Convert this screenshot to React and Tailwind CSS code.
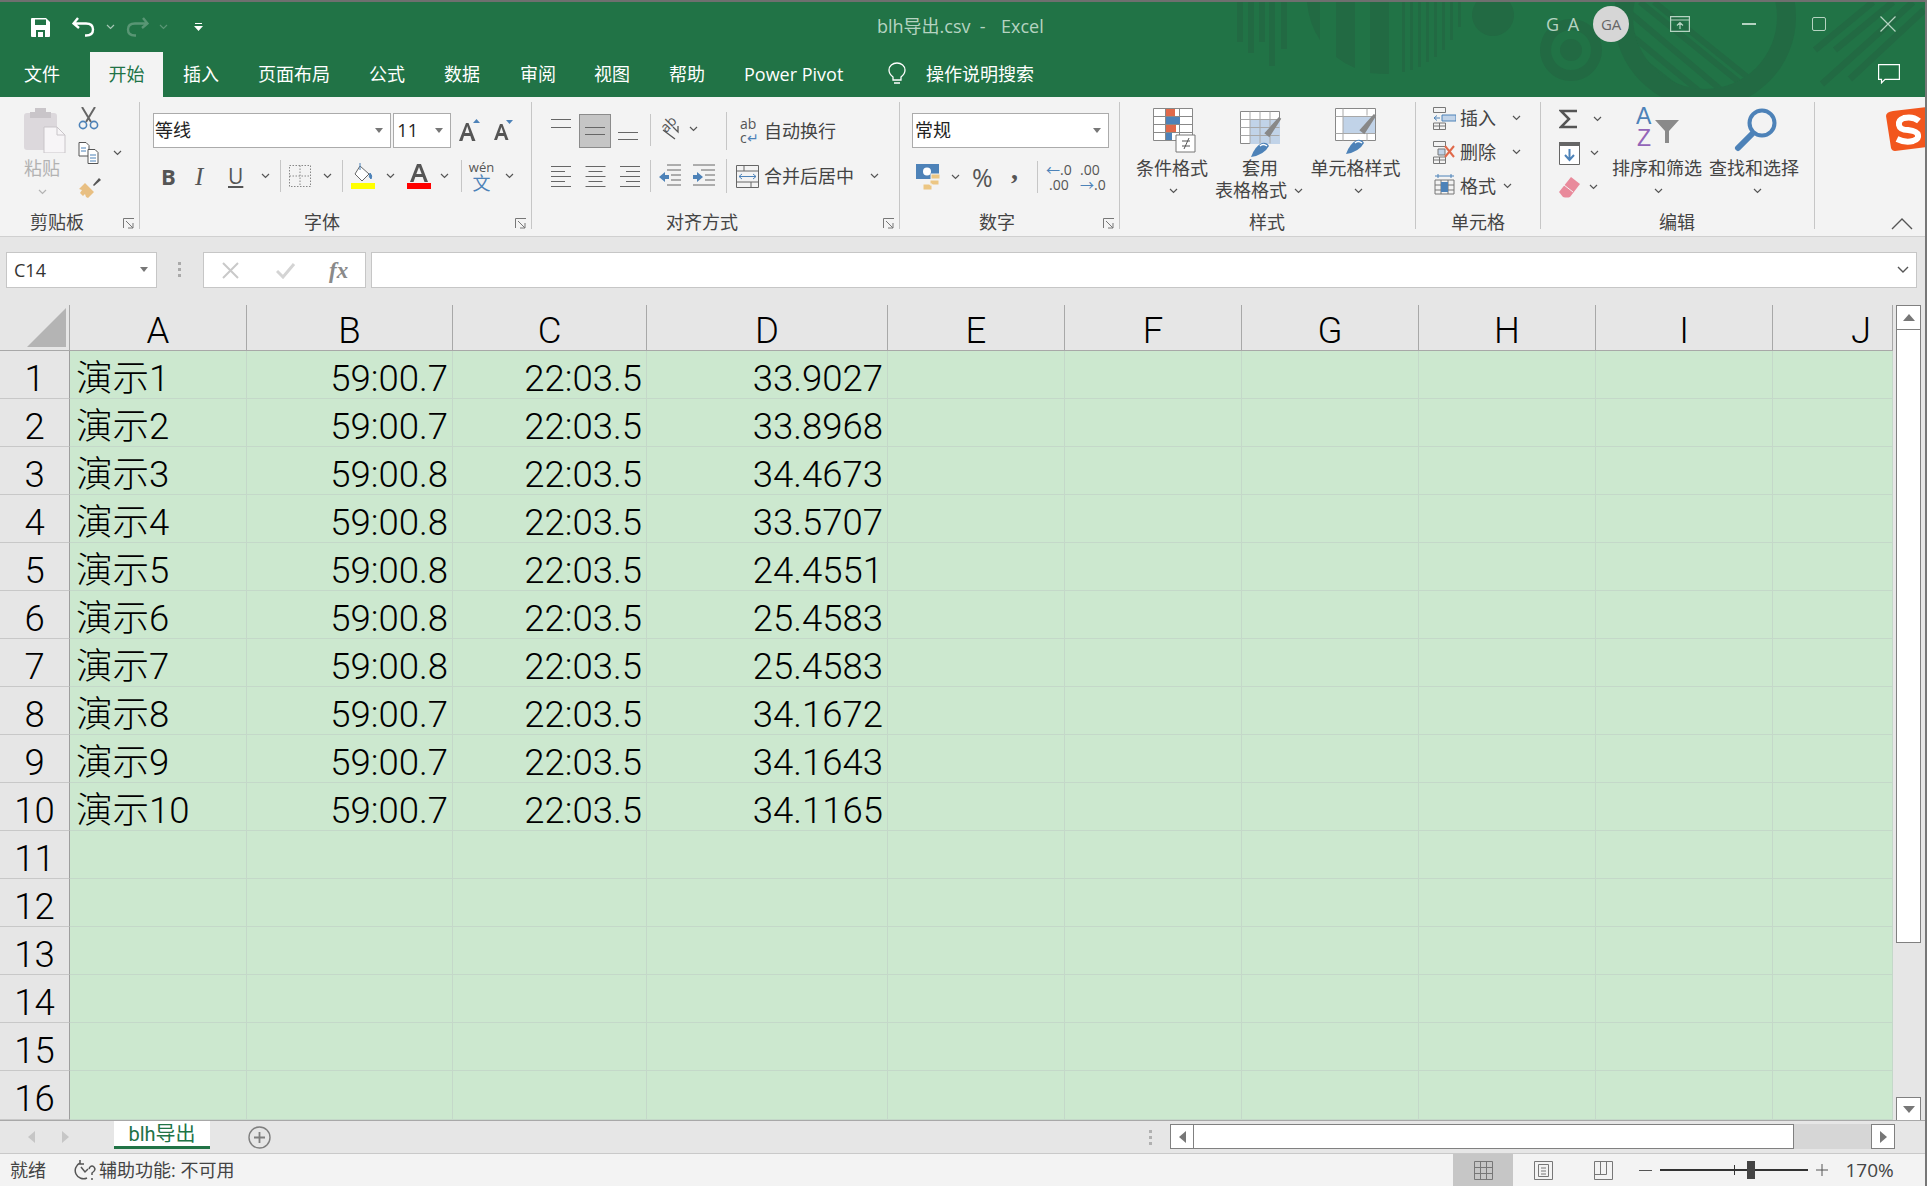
import React from "react";

const rows = [
  ["演示1", "59:00.7", "22:03.5", "33.9027"],
  ["演示2", "59:00.7", "22:03.5", "33.8968"],
  ["演示3", "59:00.8", "22:03.5", "34.4673"],
  ["演示4", "59:00.8", "22:03.5", "33.5707"],
  ["演示5", "59:00.8", "22:03.5", "24.4551"],
  ["演示6", "59:00.8", "22:03.5", "25.4583"],
  ["演示7", "59:00.8", "22:03.5", "25.4583"],
  ["演示8", "59:00.7", "22:03.5", "34.1672"],
  ["演示9", "59:00.7", "22:03.5", "34.1643"],
  ["演示10", "59:00.7", "22:03.5", "34.1165"],
];
const columns = ["A", "B", "C", "D", "E", "F", "G", "H", "I", "J"];
const tabs = [
  ["文件", "w-[90px] pl-[24px]"],
  ["开始", "w-[73px] justify-center bg-[#f3f3f3] text-[#217346]"],
  ["插入", "w-[95px] pl-[20px]"],
  ["页面布局", "w-[111px]"],
  ["公式", "w-[75px]"],
  ["数据", "w-[76px]"],
  ["审阅", "w-[74px]"],
  ["视图", "w-[75px]"],
  ["帮助", "w-[75px]"],
  ["Power Pivot", "w-[143px]"],
];

const Chev = ({ className = "", color = "#555" }) => (
  <svg width="9" height="6" viewBox="0 0 9 6" className={"shrink-0 " + className}>
    <path d="M1 1l3.5 3.5L8 1" fill="none" stroke={color} strokeWidth="1.2" />
  </svg>
);
const Caret = ({ className = "" }) => (
  <svg width="10" height="6" viewBox="0 0 10 6" className={"shrink-0 " + className}>
    <path d="M1 0h8L5 5z" fill="#777" />
  </svg>
);
const Sep = ({ className = "h-[32px]" }) => <div className={"w-px shrink-0 bg-[#c6c6c6] " + className} />;

// horizontal text alignment lines
const Lines = ({ ys, widths, align = "left", w = 21, h = 22 }) => (
  <svg width={w} height={h} viewBox={`0 0 ${w} ${h}`} className="shrink-0">
    {ys.map((y, i) => {
      const lw = widths[i % widths.length];
      const x = align === "left" ? 0 : align === "right" ? w - lw : (w - lw) / 2;
      return <rect key={y} x={x} y={y} width={lw} height="1" fill="#666" />;
    })}
  </svg>
);

const Launcher = () => (
  <svg width="12" height="11" viewBox="0 0 12 11" className="absolute right-[4px] bottom-[0px]">
    <path d="M.5 10V.5H11M3 3l7 7M10 5v5H5" fill="none" stroke="#777" />
  </svg>
);

function Group({ label, launcher, className, labelClass = "justify-center", children }) {
  return (
    <div className={"relative flex h-[127px] shrink-0 flex-col border-r border-[#c6c6c6] " + className}>
      <div className="h-[108px] shrink-0">{children}</div>
      <div className={"flex h-[24px] shrink-0 items-center whitespace-nowrap text-[18px] leading-[24px] text-[#444] " + labelClass}>{label}</div>
      {launcher && <Launcher />}
    </div>
  );
}

const Decor = () => (
  <svg width="1927" height="95" viewBox="0 0 1927 95" className="absolute left-0 top-0" fill="#226a43">
    <defs>
      <clipPath id="innerRing">
        <circle cx="1705" cy="15" r="72" />
      </clipPath>
    </defs>
    {[[1237, 40], [1248, 51], [1259, 40], [1269, 64], [1281, 47], [1402, 70], [1410, 68], [1418, 65], [1426, 60], [1434, 55], [1442, 48], [1450, 38], [1458, 25]].map(([x, h]) => (
      <rect key={x} x={x} y="0" width={x > 1400 ? 3 : 6} height={h} />
    ))}
    <path d="M1307 0h13v38q-11-16-13-38zM1336 0h19v66q-10-4-19-11zM1370 0h19v72q-10 0-19-1z" />
    <circle cx="1493" cy="13" r="21" />
    <path fillRule="evenodd" d="M1540 48a31 31 0 1 0 62 0a31 31 0 1 0-62 0zM1551 48a20 20 0 1 1 40 0a20 20 0 1 1-40 0z" />
    <circle cx="1571" cy="48" r="11" />
    <path fillRule="evenodd" d="M1614 15a91 91 0 1 0 182 0a91 91 0 1 0-182 0zM1633 15a72 72 0 1 1 144 0a72 72 0 1 1-144 0z" />
    <g clipPath="url(#innerRing)" stroke="#226a43" strokeWidth="6">
      <path d="M1640 0l104 84M1654 0l97 78M1630 11l90 76M1625 28l80 66M1626 46l64 50" />
    </g>
    <g stroke="#226a43" strokeWidth="6.5">
      <path d="M1873 0l-58 48M1893 0l-58 48M1913 0l-91 82M1924 8l-74 69" />
    </g>
  </svg>
);

const Title = () => (
  <div className="relative h-[97px] shrink-0 border-t-2 border-[#6f6f6f] bg-[#217346]">
    <Decor />
    <div className="relative flex h-[50px] items-center">
      <svg width="19" height="19" viewBox="0 0 19 19" className="ml-[31px]">
        <path d="M0 1q0-1 1-1h14l4 4v14q0 1-1 1H1q-1 0-1-1z" fill="#fff" />
        <path d="M4 1.5h11v5.5H4zM5 12h9v7H5z" fill="#217346" />
        <path d="M7 14h5v5H7z" fill="#fff" />
      </svg>
      <svg width="24" height="20" viewBox="0 0 24 20" className="ml-[22px]">
        <path d="M6 1L1.5 6.5 7 11M2 6.5h12q7 0 7 6 0 6-7 6h-1" fill="none" stroke="#fff" strokeWidth="2.4" />
      </svg>
      <Chev className="ml-[10px] opacity-60" color="#fff" />
      <svg width="24" height="20" viewBox="0 0 24 20" className="ml-[10px] opacity-25">
        <path d="M18 1l4.5 5.5L17 11M22 6.5H10q-7 0-7 6 0 6 7 6h1" fill="none" stroke="#fff" strokeWidth="2.4" />
      </svg>
      <Chev className="ml-[10px] opacity-25" color="#fff" />
      <svg width="9" height="9" viewBox="0 0 9 9" className="ml-[26px]">
        <path d="M1 0h7v1H1zM0 3h9L4.500 8z" fill="#fff" />
      </svg>
      <div className="-mt-[2px] ml-[674px] w-[190px] whitespace-pre text-[18px] leading-[24px] text-[#b5d3c1]">blh导出.csv  -  <span className="ml-[6px]">Excel</span></div>
      <div className="-mt-[6px] ml-[479px] flex items-center">
        <div className="text-[18px] tracking-[2px] text-[#b5d3c1]">G A</div>
        <div className="ml-[12px] flex h-[36px] w-[36px] items-center justify-center rounded-full bg-[#d6d6d6] text-[15px] text-[#666]">GA</div>
        <svg width="20" height="16" viewBox="0 0 20 16" className="ml-[41px]" fill="none" stroke="#b5d3c1" strokeWidth="1.2">
          <path d="M.6.6h18.8v14.8H.6zM.6 4h18.8M10 13V7M7 9.500L10 6.500l3 3" />
        </svg>
        <div className="ml-[52px] h-[1.5px] w-[14px] bg-[#b5d3c1]" />
        <div className="ml-[56px] h-[14px] w-[14px] rounded-[2px] border border-[#b5d3c1]" />
        <svg width="16" height="16" viewBox="0 0 16 16" className="ml-[54px]">
          <path d="M.5.5l15 15M15.500.5l-15 15" stroke="#b5d3c1" strokeWidth="1.2" />
        </svg>
      </div>
    </div>
    <div className="relative flex h-[45px] items-stretch text-[18px] text-white">
      {tabs.map(([t, cls]) => (
        <div key={t} className={"flex items-center " + cls}>{t}</div>
      ))}
      <svg width="20" height="24" viewBox="0 0 20 24" className="mt-[10px]" fill="none" stroke="#fff" strokeWidth="1.3">
        <path d="M6 15q-4-3-4-7a8 7 0 0 1 16 0q0 4-4 7v3H6zM7 21h6" />
      </svg>
      <div className="ml-[19px] flex items-center">操作说明搜索</div>
      <svg width="22" height="20" viewBox="0 0 22 20" className="ml-[844px] mt-[12px]" fill="none" stroke="#fff" strokeWidth="1.2">
        <path d="M.6.6h20.8v14.8H7l-3.500 3.500v-3.500H.6z" />
      </svg>
    </div>
  </div>
);

const Clipboard = () => (
  <Group label="剪贴板" launcher className="w-[140px]" labelClass="pl-[30px]">
    <div className="flex">
      <div className="flex w-[72px] flex-col items-start pl-[24px] pt-[6px]">
        <svg width="42" height="45" viewBox="0 0 42 45">
          <rect x="0" y="5" width="33" height="37" rx="3" fill="#dcd8dc" />
          <path d="M11 0h11v4h5v6H6V4h5z" fill="#c9c5c9" />
          <path d="M20 19h13l8 8v18H20z" fill="#f7f5f7" stroke="#c9c5c9" />
          <path d="M33 19v8h8" fill="none" stroke="#c9c5c9" />
        </svg>
        <div className="mt-[3px] text-[18px] leading-[24px] text-[#b2b2b2]">粘贴</div>
        <Chev className="ml-[14px] mt-[9px] opacity-40" />
      </div>
      <div className="flex flex-col pl-[6px] pt-[5px]">
        <svg width="21" height="23" viewBox="0 0 21 23" fill="none">
          <path d="M4 0l9 15M17 0L8 15" stroke="#666" strokeWidth="2" />
          <circle cx="5" cy="18" r="3.600" stroke="#4d82b8" strokeWidth="1.600" />
          <circle cx="16" cy="18" r="3.600" stroke="#4d82b8" strokeWidth="1.600" />
        </svg>
        <div className="mt-[12px] flex items-center">
          <svg width="21" height="22" viewBox="0 0 21 22" fill="#fff" stroke="#555">
            <path d="M1 .5h7l3 3V14H1z" />
            <path d="M10 7.500h7l3 3v11H10z" />
            <path d="M3 6h5M3 9h5M12 13h6M12 16h6M12 19h6" stroke="#4d82b8" />
          </svg>
          <Chev className="ml-[14px]" />
        </div>
        <svg width="23" height="22" viewBox="0 0 23 22" className="mt-[13px]">
          <path d="M15 8L21 1l2 2-7 6z" fill="#555" />
          <path d="M7 6l9 9-6 6-2-1-1-3-2 2-3-3 2-3-3-1z" fill="#e8bf82" />
        </svg>
      </div>
    </div>
  </Group>
);

const Font = () => (
  <Group label="字体" launcher className="w-[392px]" labelClass="pl-[164px]">
    <div className="flex pl-[13px] pt-[11px]">
      <div className="flex h-[35px] w-[239px] items-center justify-between border border-[#ababab] bg-white pl-[1px] pr-[6px] text-[18px] text-[#222]">
        等线<Caret />
      </div>
      <div className="ml-[2px] flex h-[35px] w-[58px] items-center justify-between border border-[#ababab] bg-white pl-[3px] pr-[6px] text-[18px] text-[#222]">
        11<Caret />
      </div>
      <div className="ml-[8px] flex h-[35px] w-[72px] items-center">
        <svg width="21" height="24" viewBox="0 0 21 24">
          <path d="M0 22L7 4h2.500l7 18h-3.500l-1.600-5H5l-1.600 5zM6 14h4.500L8.200 7z" fill="#555" />
          <path d="M14 4l3.500-4 3.500 4z" fill="#4d82b8" />
        </svg>
        <svg width="19" height="22" viewBox="0 0 19 22" className="ml-[14px]">
          <path d="M0 20L6 4h2.500l6 16h-3l-1.400-4H4.400l-1.400 4zM5.400 13h4l-2-6z" fill="#555" />
          <path d="M12 0h7l-3.500 4z" fill="#4d82b8" />
        </svg>
      </div>
    </div>
    <div className="mt-[12px] flex h-[32px] items-center pl-[13px] text-[#555]">
      <div className="w-[32px] pl-[8px] text-[22px] font-bold leading-none">B</div>
      <div className="w-[34px] pl-[10px] font-['Liberation_Serif',serif] text-[25px] italic leading-none">I</div>
      <div className="w-[35px] pl-[9px] text-[21px] leading-none underline underline-offset-2">U</div>
      <div className="w-[20px] pl-[7px]"><Chev /></div>
      <div className="w-[6px]" />
      <Sep />
      <div className="flex w-[37px] justify-center">
        <svg width="22" height="22" viewBox="0 0 22 22">
          <path d="M.5.5h21v21H.5zM11 .5v21M.5 11h21" fill="none" stroke="#888" strokeDasharray="1.500 1.500" />
        </svg>
      </div>
      <div className="w-[18px] pl-[5px]"><Chev /></div>
      <div className="w-[6px]" />
      <Sep />
      <div className="flex w-[40px] justify-center">
        <svg width="24" height="26" viewBox="0 0 24 26">
          <path d="M9 3l9 8-7 7-7-7z" fill="#fff" stroke="#666" />
          <path d="M9 0v7M19 10q3 3 1 6-3-2-1-6z" fill="#4d82b8" stroke="#4d82b8" />
          <rect x="0" y="20" width="24" height="6" fill="#ffff00" />
        </svg>
      </div>
      <div className="w-[14px] pl-[3px]"><Chev /></div>
      <div className="flex w-[44px] justify-center">
        <svg width="24" height="26" viewBox="0 0 24 26">
          <path d="M3 19L10 1h4l7 18h-3.500l-1.800-5H8.300l-1.800 5zM9.300 11h5.400L12 4z" fill="#555" />
          <rect x="0" y="20" width="24" height="6" fill="#ff0000" />
        </svg>
      </div>
      <div className="w-[10px]"><Chev className="-ml-[1px]" /></div>
      <div className="w-[10px]" />
      <Sep />
      <div className="flex w-[39px] flex-col items-center text-[13px] leading-[13px] text-[#555]">
        <span>wén</span>
        <span className="text-[18px] leading-[18px] text-[#4d82b8]">文</span>
      </div>
      <div className="w-[16px] pl-[4px]"><Chev /></div>
    </div>
  </Group>
);

const Align = () => (
  <Group label="对齐方式" launcher className="w-[368px]" labelClass="pl-[134px]">
    <div className="flex h-[46px] items-start pl-[19px] pt-[12px]">
      <div className="w-[28px] pt-[2px]"><Lines ys={[3, 11]} widths={[20]} /></div>
      <div className="flex h-[34px] w-[32px] items-center justify-center border border-[#8b8b8b] bg-[#c5c5c5]">
        <Lines ys={[6, 13]} widths={[20]} h={20} />
      </div>
      <div className="w-[39px] pl-[7px] pt-[15px]"><Lines ys={[3, 10]} widths={[20, 20]} h={14} /></div>
      <Sep />
      <div className="flex w-[75px] items-center pl-[9px] pt-[4px]">
        <div className="relative h-[22px] w-[21px]">
          <span className="absolute left-[0px] top-[-2px] -rotate-45 text-[14px] leading-[16px] text-[#555]">ab</span>
          <svg width="21" height="22" viewBox="0 0 21 22" className="absolute left-0 top-0" fill="none" stroke="#555" strokeWidth="1.300">
            <path d="M3 12l12 9M13 9l5 5v-6" />
          </svg>
        </div>
        <Chev className="ml-[8px]" />
      </div>
      <Sep className="h-[38px] -mt-[2px]" />
      <div className="flex h-[34px] items-center pl-[13px] text-[18px] text-[#444]">
        <span className="w-[19px] whitespace-nowrap text-[14px] leading-[14px] text-[#555]">ab<br />c<span className="text-[#4d82b8]">↵</span></span>
        <span className="ml-[5px]">自动换行</span>
      </div>
    </div>
    <div className="mt-[12px] flex h-[32px] items-center pl-[19px]">
      <div className="w-[34px]"><Lines ys={[2, 7, 12, 17, 22]} widths={[20, 14]} h={24} /></div>
      <div className="w-[34px]"><Lines ys={[2, 7, 12, 17, 22]} widths={[20, 14]} align="center" h={24} /></div>
      <div className="w-[31px]"><Lines ys={[2, 7, 12, 17, 22]} widths={[20, 14]} align="right" h={24} /></div>
      <Sep />
      <div className="w-[34px] pl-[8px]">
        <svg width="22" height="24" viewBox="0 0 22 24">
          <path d="M8 1h14M8 6h14M12 11h10M12 16h10M8 21h14" stroke="#666" />
          <path d="M0 13l6-5v3h4v4H6v3z" fill="#4d82b8" />
        </svg>
      </div>
      <div className="w-[41px] pl-[8px]">
        <svg width="22" height="24" viewBox="0 0 22 24">
          <path d="M0 1h22M8 6h14M12 11h10M12 16h10M0 21h22" stroke="#666" />
          <path d="M10 13L4 8v3H0v4h4v3z" fill="#4d82b8" />
        </svg>
      </div>
      <Sep className="h-[34px]" />
      <div className="flex items-center pl-[9px] text-[18px] text-[#444]">
        <svg width="23" height="23" viewBox="0 0 23 23" fill="none" stroke="#666">
          <path d="M.5.5h22v22H.5zM.5 6h22M.5 17h22M8 .5V6M15 17v5.500" />
          <path d="M3 11.500h17M6 9l-3 2.500L6 14M17 9l3 2.500-3 2.500" stroke="#4d82b8" />
        </svg>
        <span className="ml-[5px]">合并后居中</span>
        <Chev className="ml-[16px]" />
      </div>
    </div>
  </Group>
);

const NumberGroup = () => (
  <Group label="数字" launcher className="w-[220px]" labelClass="pl-[79px]">
    <div className="pl-[12px] pt-[11px]">
      <div className="flex h-[35px] w-[197px] items-center justify-between border border-[#ababab] bg-white pl-[2px] pr-[6px] text-[18px] text-[#222]">
        常规<Caret />
      </div>
    </div>
    <div className="mt-[13px] flex h-[32px] items-center pl-[16px] text-[#555]">
      <svg width="24" height="27" viewBox="0 0 24 27">
        <path d="M0 0h23v15H0z" fill="#4d82b8" />
        <circle cx="11" cy="7.500" r="4" fill="#fff" />
        <path d="M15 10h9v5h-9zM14 16h9v5h-9zM7 20h9v6H7z" fill="#ecc683" stroke="#f3f3f3" />
      </svg>
      <Chev className="ml-[11px]" />
      <div className="ml-[12px] w-[39px] text-[25px] leading-none">%</div>
      <div className="-mt-[14px] w-[26px] font-['Liberation_Serif',serif] text-[28px] font-bold leading-none">,</div>
      <Sep />
      <div className="ml-[8px] flex w-[34px] flex-col text-[14px] leading-[15px]">
        <span><span className="text-[#4d82b8]">←</span>.0</span>
        <span className="pl-[3px]">.00</span>
      </div>
      <div className="flex w-[24px] flex-col text-[14px] leading-[15px]">
        <span>.00</span>
        <span><span className="text-[#4d82b8]">→</span>.0</span>
      </div>
    </div>
  </Group>
);

const BrushOver = () => (
  <g>
    <path d="M40 7L29 24l-2.500-2z" fill="#888" stroke="#888" strokeWidth="3" />
    <path d="M11 46q4-11 11-14 5-1 7 3-5 9-18 11z" fill="#4d82b8" />
    <path d="M20 35q3-3 7 0" fill="none" stroke="#fff" strokeWidth="1.500" />
  </g>
);

const Styles = () => (
  <Group label="样式" className="w-[296px]" labelClass="pl-[129px] justify-start">
    <div className="flex whitespace-nowrap text-[18px] text-[#444]">
      <div className="w-[88px] pl-[16px]">
        <div className="h-[55px] pl-[17px] pt-[6px]">
          <svg width="43" height="45" viewBox="0 0 43 45">
            <path d="M.5.500h39v32H.5zM.5 8.500h39M.5 16.500h39M.5 24.500h39M12.500.5v32M26.500.5v32" fill="#fff" stroke="#888" />
            <path d="M13 1h9v7h-9zM13 17h10v7H13z" fill="#e0694a" />
            <path d="M13 9h14v7H13zM13 25h6v7h-6z" fill="#4d82b8" />
            <path d="M23 27h19v17H23z" fill="#fff" stroke="#777" />
            <path d="M29 33h8M29 38h8M36 30l-5 11" stroke="#555" fill="none" />
          </svg>
        </div>
        <div className="h-[22px] leading-[23px]">条件格式</div>
        <div className="flex h-[23px] items-center pl-[33px]"><Chev /></div>
      </div>
      <div className="w-[96px] pl-[7px]">
        <div className="h-[55px] pl-[25px] pt-[9px]">
          <svg width="46" height="46" viewBox="0 0 46 46">
            <path d="M.5.500h39v32H.5z" fill="#fff" stroke="#888" />
            <path d="M10 8h30v25H10z" fill="#c1d3e8" />
            <path d="M.5 8.500h39M.5 16.500h39M.5 24.500h39M10 .5v32M20 .5v32M30 .5v32" stroke="#a8a8a8" fill="none" />
            <BrushOver />
          </svg>
        </div>
        <div className="h-[22px] pl-[27px] leading-[23px]">套用</div>
        <div className="flex h-[23px] items-center leading-[23px]">表格格式<Chev className="ml-[7px]" /></div>
      </div>
      <div className="w-[112px] pl-[7px]">
        <div className="h-[55px] pl-[24px] pt-[6px]">
          <svg width="46" height="46" viewBox="0 0 46 46">
            <path d="M.5.500h40v32H.5z" fill="#fff" stroke="#888" />
            <path d="M8 8h32v17H8z" fill="#c1d3e8" />
            <path d="M.5 8.500h40M.5 25.500h40M8 .5v32M32 .5v7M32 26v7" stroke="#a8a8a8" fill="none" />
            <BrushOver />
          </svg>
        </div>
        <div className="h-[22px] leading-[23px]">单元格样式</div>
        <div className="flex h-[23px] items-center pl-[43px]"><Chev /></div>
      </div>
    </div>
  </Group>
);

const CellRow = ({ icon, label, chevClass }) => (
  <div className="flex h-[34px] items-center text-[18px] text-[#444]">
    <div className="w-[27px]">{icon}</div>
    <span>{label}</span>
    <Chev className={chevClass} />
  </div>
);

const Cells = () => (
  <Group label="单元格" className="w-[125px]">
    <div className="-mt-[1px] pl-[17px]">
      <CellRow
        label="插入"
        chevClass="ml-[16px]"
        icon={
          <svg width="23" height="23" viewBox="0 0 23 23" fill="none" stroke="#777">
            <path d="M.5.500h12v5H.5zM.5 16h12v6.500H.5zM6.500 16v6.500M.5 19h12" />
            <path d="M9 8h14v6H9z" fill="#c1d3e8" stroke="#4d82b8" />
            <path d="M1 11h6M4 8.500L1 11l3 2.500" stroke="#4d82b8" />
          </svg>
        }
      />
      <CellRow
        label="删除"
        chevClass="ml-[16px]"
        icon={
          <svg width="23" height="23" viewBox="0 0 23 23" fill="none" stroke="#777">
            <path d="M.5.500h12v5H.5zM.5 16h12v6.500H.5zM6.500 16v6.500M.5 19h12" />
            <path d="M5 8h7v6H5z" fill="#c1d3e8" />
            <path d="M12 5l9 11M21 5l-9 11" stroke="#e0694a" strokeWidth="2" />
          </svg>
        }
      />
      <CellRow
        label="格式"
        chevClass="ml-[7px]"
        icon={
          <svg width="23" height="24" viewBox="0 0 23 24" fill="none" stroke="#777">
            <path d="M2 6h19v14H2zM2 11h19M2 16h19M8 6v14M15 6v14" />
            <path d="M8 8h7v10H8z" fill="#4d82b8" stroke="none" />
            <path d="M2 2h19M5 0v4M18 0v4" stroke="#4d82b8" />
          </svg>
        }
      />
    </div>
  </Group>
);

const Edit = () => (
  <Group label="编辑" className="w-[274px]" labelClass="pl-[118px] justify-start">
    <div className="flex whitespace-nowrap text-[18px] text-[#444]">
      <div className="w-[71px] pl-[18px]">
        <div className="flex h-[34px] items-center">
          <svg width="20" height="20" viewBox="0 0 20 20" fill="none" stroke="#555" strokeWidth="2.500">
            <path d="M18 2H2l8 8-8 8h16" />
          </svg>
          <Chev className="ml-[14px]" />
        </div>
        <div className="flex h-[34px] items-center">
          <svg width="21" height="23" viewBox="0 0 21 23">
            <path d="M.5.5h20v22H.5z" fill="#fff" stroke="#666" />
            <path d="M0 0h21v4H0z" fill="#666" />
            <path d="M10.500 7v11M6 13l4.500 5 4.500-5" fill="none" stroke="#4d82b8" strokeWidth="2" />
          </svg>
          <Chev className="ml-[10px]" />
        </div>
        <div className="flex h-[34px] items-center">
          <svg width="21" height="21" viewBox="0 0 21 21">
            <path d="M12 0l9 7-10 13q-3 1-7 0L0 15z" fill="#e98a9b" />
            <path d="M5 8l9 7" stroke="#f3f3f3" />
          </svg>
          <Chev className="ml-[9px]" />
        </div>
      </div>
      <div className="w-[97px]">
        <div className="h-[55px] pl-[24px] pt-[4px]">
          <svg width="44" height="42" viewBox="0 0 44 42">
            <text x="0" y="18" fontSize="23" fill="#4d82b8" fontFamily="Liberation Sans">A</text>
            <text x="1" y="40" fontSize="23" fill="#9365b8" fontFamily="Liberation Sans">Z</text>
            <path d="M19 14h24L33 25v12h-4V25z" fill="#8a8a8a" />
          </svg>
        </div>
        <div className="h-[22px] leading-[23px]">排序和筛选</div>
        <div className="flex h-[23px] items-center pl-[42px]"><Chev /></div>
      </div>
      <div className="w-[105px]">
        <div className="h-[55px] pl-[25px] pt-[6px]">
          <svg width="44" height="44" viewBox="0 0 44 44" fill="none" stroke="#4d82b8">
            <circle cx="28" cy="15" r="12.500" strokeWidth="4" />
            <path d="M18 26L4 40" strokeWidth="6" strokeLinecap="round" />
          </svg>
        </div>
        <div className="h-[22px] leading-[23px]">查找和选择</div>
        <div className="flex h-[23px] items-center pl-[44px]"><Chev /></div>
      </div>
    </div>
  </Group>
);

const Ribbon = () => (
  <div className="relative flex h-[140px] shrink-0 items-start border-b border-[#d0d0d0] bg-[#f3f3f3] pt-[5px]">
    <Clipboard />
    <Font />
    <Align />
    <NumberGroup />
    <Styles />
    <Cells />
    <Edit />
    <svg width="22" height="12" viewBox="0 0 22 12" className="absolute left-[1891px] top-[121px]">
      <path d="M1 11L11 1l10 10" fill="none" stroke="#555" strokeWidth="1.400" />
    </svg>
    <svg width="42" height="44" viewBox="0 0 42 44" className="absolute right-0 top-[10px]">
      <path d="M8 4l34-4v40L10 44q-3 0-4-3L1 9q0-4 7-5z" fill="#f2561d" />
      <path d="M34 14q-6-5-15-3-6 2-5 7t9 5q9 1 10 5t-5 6q-8 2-16-2" fill="none" stroke="#fff" strokeWidth="6" />
    </svg>
  </div>
);

const FormulaBar = () => (
  <div className="flex h-[68px] shrink-0 items-start bg-[#e6e6e6] pt-[15px]">
    <div className="ml-[6px] flex h-[36px] w-[151px] items-center justify-between border border-[#c6c6c6] bg-white pl-[7px] pr-[7px] text-[18px] text-[#333]">
      C14<Caret />
    </div>
    <div className="ml-[21px] mt-[10px] flex flex-col gap-[3px]">
      <span className="h-[3px] w-[3px] bg-[#aaa]" />
      <span className="h-[3px] w-[3px] bg-[#aaa]" />
      <span className="h-[3px] w-[3px] bg-[#aaa]" />
    </div>
    <div className="ml-[22px] flex h-[36px] w-[163px] items-center border border-[#c6c6c6] bg-white">
      <svg width="17" height="17" viewBox="0 0 17 17" className="ml-[18px]">
        <path d="M1 1l15 15M16 1L1 16" stroke="#c9c9c9" strokeWidth="2" />
      </svg>
      <svg width="20" height="17" viewBox="0 0 20 17" className="ml-[37px]">
        <path d="M1 9l6 6L18 2" fill="none" stroke="#d4d4d4" strokeWidth="3" />
      </svg>
      <span className="ml-[33px] font-['Liberation_Serif',serif] text-[23px] font-bold italic leading-none text-[#8a8a8a]">fx</span>
    </div>
    <div className="ml-[5px] flex h-[36px] w-[1546px] items-center justify-end border border-[#c6c6c6] bg-white pr-[7px]">
      <svg width="12" height="8" viewBox="0 0 12 8">
        <path d="M1 1l5 5 5-5" fill="none" stroke="#555" strokeWidth="1.400" />
      </svg>
    </div>
  </div>
);

const Sheet = () => {
  const body = [];
  for (let r = 1; r <= 17; r++) {
    const data = rows[r - 1] || ["", "", "", ""];
    body.push(
      <div key={"h" + r} className="flex justify-center overflow-hidden border-b border-r border-b-[#c8c8c8] border-r-[#9e9e9e] bg-[#e6e6e6] pt-[4px] leading-[48px] text-black">
        {r}
      </div>
    );
    columns.forEach((c, i) => {
      const text = data[i] || "";
      body.push(
        <div key={c + r} className={"overflow-hidden whitespace-nowrap border-b border-r border-[#c4d8c9] pt-[4px] leading-[48px] text-black " + (i === 0 ? "pl-[6px] text-left" : "pr-[4px] text-right")}>
          {text}
        </div>
      );
    });
  }
  return (
    <div className="h-[815px] w-[1893px] overflow-hidden bg-[#cce8cf] font-['Roboto','Noto_Sans_CJK_SC',sans-serif] text-[36.5px] font-light">
      <div className="grid grid-cols-[70px_177px_206px_194px_241px_177px_177px_177px_177px_177px_120px] grid-rows-[46px] auto-rows-[48.04px]">
        <div className="flex items-end justify-end border-b border-r border-[#a8a8a8] bg-[#e6e6e6] pb-[3px] pr-[3px]">
          <div className="h-[39px] w-[39px] bg-[#b4b4b4] [clip-path:polygon(100%_0,100%_100%,0_100%)]" />
        </div>
        {columns.map((c) => (
          <div key={c} className={"flex items-end justify-center border-b border-r border-[#a8a8a8] bg-[#e6e6e6] leading-[48px] text-black " + (c === "J" ? "pl-[57px]" : "")}>
            <span className="mb-[-5px]">{c}</span>
          </div>
        ))}
        {body}
      </div>
    </div>
  );
};

const VScroll = () => (
  <div className="ml-[3px] flex h-[817px] w-[25px] flex-col">
    <div className="flex h-[25px] items-center justify-center border border-[#808080] bg-white">
      <svg width="12" height="7" viewBox="0 0 12 7"><path d="M6 0l6 7H0z" fill="#777" /></svg>
    </div>
    <div className="h-[613px] border-x border-b border-[#808080] bg-white" />
    <div className="flex-1" />
    <div className="flex h-[25px] items-center justify-center border border-[#808080] bg-white">
      <svg width="12" height="7" viewBox="0 0 12 7"><path d="M0 0h12L6 7z" fill="#777" /></svg>
    </div>
  </div>
);

const Bottom = () => (
  <div className="flex h-[33px] shrink-0 items-start border-t border-[#a8a8a8] bg-[#e6e6e6]">
    <svg width="8" height="12" viewBox="0 0 8 12" className="ml-[28px] mt-[10px]"><path d="M7 0v12L0 6z" fill="#c6c6c6" /></svg>
    <svg width="8" height="12" viewBox="0 0 8 12" className="ml-[26px] mt-[10px]"><path d="M0 0v12l7-6z" fill="#c6c6c6" /></svg>
    <div className="ml-[44px] flex h-[28px] w-[96px] items-center justify-center border-b-[3px] border-[#217346] bg-white font-['Roboto','Noto_Sans_CJK_SC',sans-serif] text-[20px] leading-none text-[#217346]">
      blh导出
    </div>
    <svg width="23" height="23" viewBox="0 0 23 23" className="ml-[38px] mt-[5px]" fill="none" stroke="#7f7f7f">
      <circle cx="11.500" cy="11.500" r="10.500" strokeWidth="1.400" />
      <path d="M6 11.500h11M11.500 6v11" strokeWidth="1.800" />
    </svg>
    <div className="ml-[878px] mt-[9px] flex flex-col gap-[3px]">
      <span className="h-[3px] w-[3px] bg-[#b0b0b0]" />
      <span className="h-[3px] w-[3px] bg-[#b0b0b0]" />
      <span className="h-[3px] w-[3px] bg-[#b0b0b0]" />
    </div>
    <div className="ml-[18px] mt-[3px] flex h-[25px] w-[725px]">
      <div className="flex w-[24px] items-center justify-center border border-[#808080] bg-white">
        <svg width="7" height="12" viewBox="0 0 7 12"><path d="M7 0v12L0 6z" fill="#777" /></svg>
      </div>
      <div className="w-[600px] border-y border-r border-[#808080] bg-white" />
      <div className="flex-1 bg-[#d6d6d6]" />
      <div className="flex w-[24px] items-center justify-center border border-[#808080] bg-white">
        <svg width="7" height="12" viewBox="0 0 7 12"><path d="M0 0v12l7-6z" fill="#777" /></svg>
      </div>
    </div>
  </div>
);

const Status = () => (
  <div className="flex h-[33px] shrink-0 items-center border-t border-[#c9c9c9] bg-[#f3f3f3] text-[18px] leading-[22px] text-[#444]">
    <span className="ml-[10px]">就绪</span>
    <svg width="22" height="22" viewBox="0 0 22 22" className="ml-[28px]" fill="none" stroke="#555" strokeWidth="1.500">
      <path d="M6 4a8 8 0 1 0 7 15M6 1v4h4M7 8l4 5 3-3" />
      <path d="M15 10q1-3 3-3t3 3q0 2-3 4v2M18 19v2" />
    </svg>
    <span className="ml-[3px]">辅助功能: 不可用</span>
    <div className="ml-[1219px] flex h-[32px] w-[60px] items-center justify-center bg-[#c6c6c6]">
      <svg width="19" height="19" viewBox="0 0 19 19" fill="none" stroke="#777">
        <path d="M.5.500h18v18H.5zM.5 6.500h18M.5 12.500h18M6.500.5v18M12.500.5v18" />
      </svg>
    </div>
    <div className="flex w-[60px] justify-center">
      <svg width="19" height="19" viewBox="0 0 19 19" fill="none" stroke="#777">
        <path d="M.5.500h18v18H.5zM4.500 3.500h10v12h-10zM7 7h5M7 10h5M7 13h5" />
      </svg>
    </div>
    <div className="flex w-[60px] justify-center">
      <svg width="19" height="19" viewBox="0 0 19 19" fill="none" stroke="#777">
        <path d="M.5.500h18v18H.5zM.5 13.500h12V.5M6.500.5v13" />
      </svg>
    </div>
    <div className="ml-[6px] h-px w-[13px] bg-[#555]" />
    <div className="relative ml-[8px] h-[2px] w-[148px] bg-[#333]">
      <div className="absolute left-[74px] top-[-4px] h-[10px] w-px bg-[#333]" />
      <div className="absolute left-[87px] top-[-8px] h-[18px] w-[8px] bg-[#444]" />
    </div>
    <svg width="12" height="12" viewBox="0 0 12 12" className="ml-[8px]"><path d="M0 6h12M6 0v12" stroke="#555" /></svg>
    <span className="ml-[17px] text-[19px]">170%</span>
  </div>
);

export default function App() {
  return (
    <div className="relative flex h-[1186px] w-[1927px] flex-col overflow-hidden bg-[#e6e6e6] font-['Open_Sans','Noto_Sans_CJK_SC',sans-serif]">
      <Title />
      <Ribbon />
      <FormulaBar />
      <div className="flex h-[815px] shrink-0">
        <Sheet />
        <VScroll />
      </div>
      <Bottom />
      <Status />
      <div className="absolute right-0 top-0 h-full w-[2px] bg-[#777]" />
    </div>
  );
}
